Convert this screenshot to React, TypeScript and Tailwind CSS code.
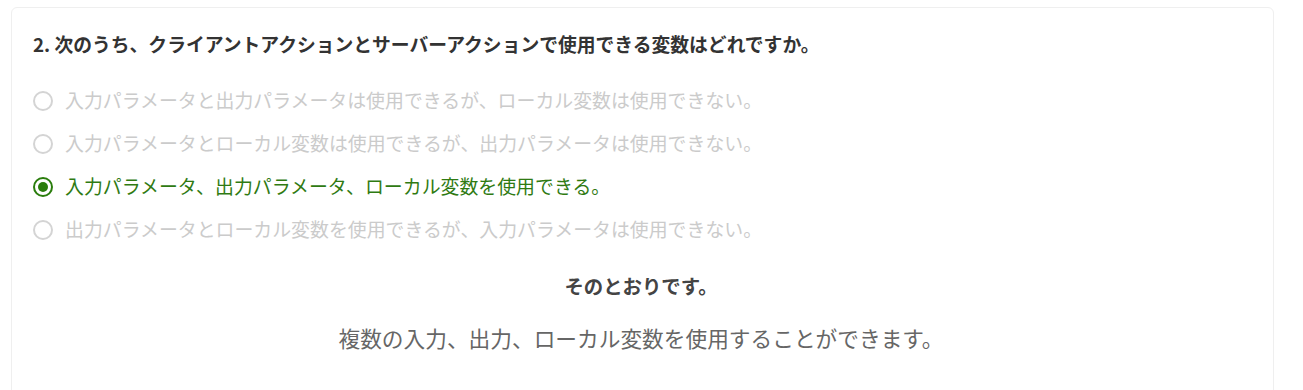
const options = [
  '入力パラメータと出力パラメータは使用できるが、ローカル変数は使用できない。',
  '入力パラメータとローカル変数は使用できるが、出力パラメータは使用できない。',
  '入力パラメータ、出力パラメータ、ローカル変数を使用できる。',
  '出力パラメータとローカル変数を使用できるが、入力パラメータは使用できない。',
];

const selected = 2;

function Radio({ checked }: { checked: boolean }) {
  if (checked) {
    return (
      <span className="flex h-[20px] w-[20px] shrink-0 items-center justify-center rounded-full border-[2.5px] border-[#2a7d0c]">
        <span className="h-[10px] w-[10px] rounded-full bg-[#2a7d0c]" />
      </span>
    );
  }
  return <span className="h-[20px] w-[20px] shrink-0 rounded-full border-2 border-[#d4d4d4]" />;
}

export default function App() {
  return (
    <div className="min-h-screen bg-white pl-[11px] pr-[29px] pt-[7px] font-['Noto_Sans_CJK_JP','Noto_Sans',sans-serif]">
      <div className="h-[400px] rounded-md border border-[#efefef] bg-white pl-[21px] pr-6">
        <h2 className="pt-[20px] text-[18.8px] font-bold leading-[32px] text-[#333]">
          2. 次のうち、クライアントアクションとサーバーアクションで使用できる変数はどれですか。
        </h2>
        <ul className="mt-[19px] flex flex-col">
          {options.map((text, i) => (
            <li key={i} className="flex h-[43px] items-center gap-[12px]">
              <Radio checked={i === selected} />
              <span
                className={
                  i === selected
                    ? 'text-[18.9px] text-[#2f7a12]'
                    : 'text-[18.9px] text-[#cbcbcb]'
                }
              >
                {text}
              </span>
            </li>
          ))}
        </ul>
        <div className="mt-[21px] text-center">
          <p className="text-[19.4px] font-bold leading-[28px] text-[#444]">そのとおりです。</p>
          <p className="mt-[24px] text-[21.7px] leading-[28px] text-[#666]">
            複数の入力、出力、ローカル変数を使用することができます。
          </p>
        </div>
      </div>
    </div>
  );
}
